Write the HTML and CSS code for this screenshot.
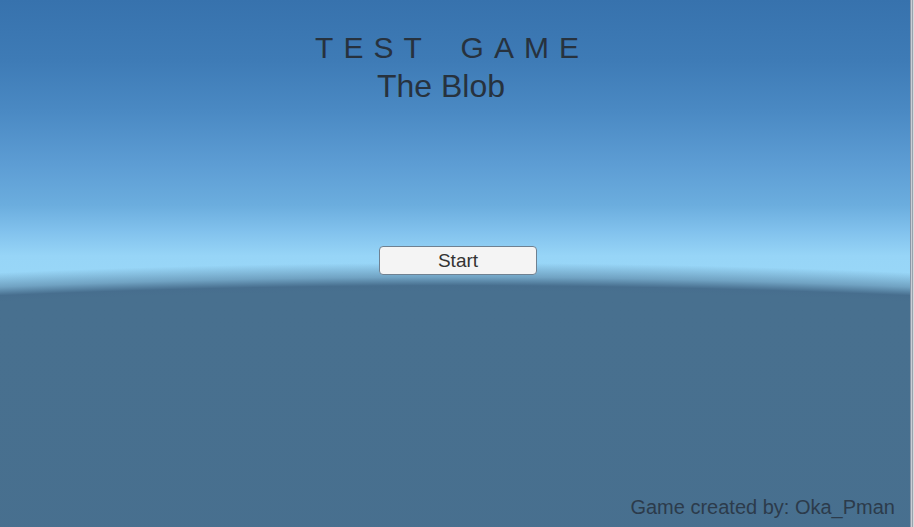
FILE: index.html
```html
<!DOCTYPE html>
<html lang="en">
<head>
<meta charset="utf-8">
<title>Test Game - The Blob</title>
<link rel="stylesheet" href="styles.css">
</head>
<body>
<div class="screen">
  <main class="scene">
    <header class="titles">
      <h1 class="title">TEST GAME</h1>
      <h2 class="subtitle">The Blob</h2>
    </header>
    <div class="menu">
      <button class="start-btn" type="button">Start</button>
    </div>
    <footer class="credits">Game created by: Oka_Pman</footer>
  </main>
  <div class="edge"></div>
</div>
</body>
</html>
```
FILE: styles.css
```css
html, body {
  margin: 0;
  padding: 0;
  height: 100%;
  overflow: hidden;
}

body {
  font-family: "Liberation Sans", Arial, sans-serif;
  color: #27323e;
}

.screen {
  display: flex;
  width: 914px;
  height: 527px;
}

/* Sky with a gently curved ground plane meeting it at the horizon */
.scene {
  flex: 1;
  display: flex;
  flex-direction: column;
  background:
    radial-gradient(ellipse 3540px 1200px at 50% 1482px,
      #466d8e 0,
      #48708f 99.2%,
      #476e8e 99.7%,
      rgba(95, 140, 172, 0.7) 100.4%,
      rgba(140, 195, 228, 0) 101.6%),
    linear-gradient(180deg,
      #3772ad 0px,
      #3e7bb6 60px,
      #4a89c3 110px,
      #5d9dd4 165px,
      #6badde 205px,
      #82c2ed 232px,
      #97d5f7 256px,
      #9ad8f8 300px);
}

.titles {
  display: flex;
  flex-direction: column;
  align-items: center;
  padding: 33px 10px 0 0;
}

.title {
  margin: 0;
  font-size: 30px;
  font-weight: normal;
  line-height: 30px;
  letter-spacing: 10px;
  word-spacing: 11px;
  padding-left: 4px;
}

.subtitle {
  margin: 6px 0 0;
  font-size: 32px;
  font-weight: normal;
  line-height: 34px;
  padding-right: 18px;
}

.menu {
  display: flex;
  justify-content: center;
  padding: 143px 0 0 6px;
}

.start-btn {
  width: 158px;
  height: 29px;
  padding: 0;
  background: #f4f4f4;
  border: 1px solid #6f8191;
  border-radius: 4px;
  font-family: "Liberation Sans", Arial, sans-serif;
  font-size: 19px;
  color: #333333;
  line-height: 27px;
}

.credits {
  margin-top: auto;
  align-self: flex-end;
  padding: 0 15px 8px 0;
  font-size: 20px;
  color: #2c3b4b;
}

.edge {
  width: 4px;
  background: linear-gradient(90deg, #8a98a8 0, #8a98a8 1px, #c9ced4 1px, #c9ced4 2px, #9aa3ad 2px, #9aa3ad 3px, #d6d9dd 3px);
}
```
